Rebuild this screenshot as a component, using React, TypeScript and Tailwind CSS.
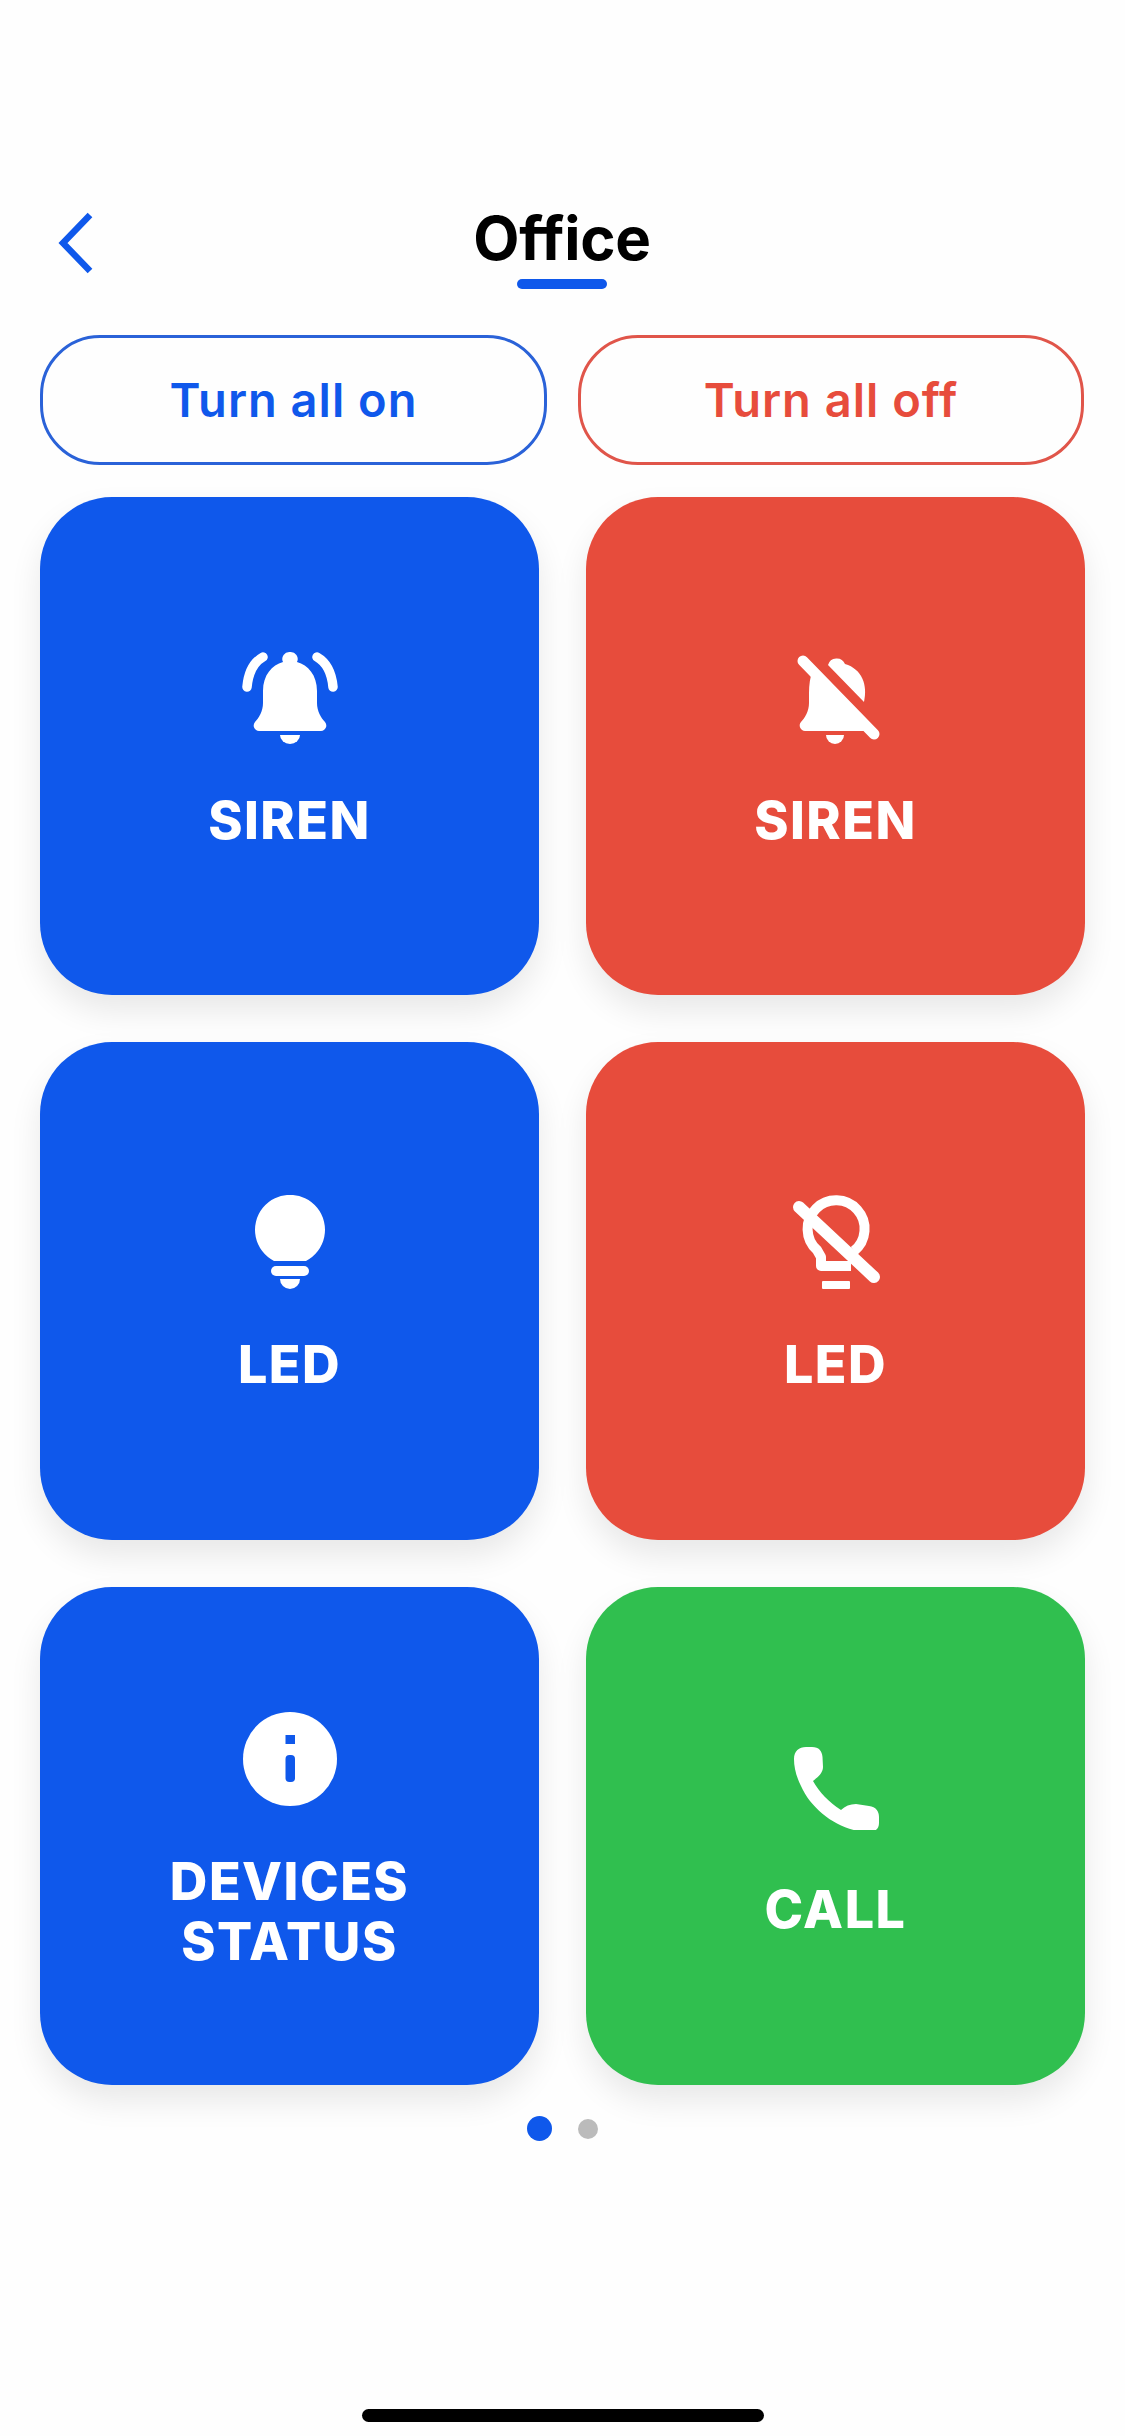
import React from 'react';

const font = { fontFamily: 'Inter, "Liberation Sans", sans-serif' };

const SirenOn = () => (
  <svg width="100" height="96" viewBox="40 30 100 96" fill="#fff">
    <path d="M90 33a7 7 0 0 1 7 10C108 46 117 56 117 72V84C117 92 121 99 125 103A5.500 5.500 0 0 1 121 112H59A5.500 5.500 0 0 1 55 103C59 99 63 92 63 84V72C63 56 72 46 83 43a7 7 0 0 1 7-10Z" />
    <path d="M80 116H100A10 9 0 0 1 80 116Z" />
    <path d="M63 38Q49 46 47 68M117 38Q131 46 133 68" fill="none" stroke="#fff" strokeWidth="9.500" strokeLinecap="round" />
  </svg>
);

const SirenOff = () => (
  <svg width="100" height="96" viewBox="45 30 100 96" fill="#fff">
    <path d="M72 50C69 58 68 66 68 74V84C68 92 64 99 60 103A5.500 5.500 0 0 0 64 112H127L72 50Z" />
    <path d="M87 46L123 83C127 66 121 50 104 45a9 9 0 0 0-17 1Z" />
    <path d="M85 116H103A9 9 0 0 1 85 116Z" />
    <path d="M62 42L133 115" fill="none" stroke="#fff" strokeWidth="11" strokeLinecap="round" />
  </svg>
);

const LedOn = () => (
  <svg width="100" height="96" viewBox="40 26 100 96" fill="#fff">
    <path d="M74 92A35 35 0 1 1 106 92Z" />
    <rect x="71" y="97" width="38" height="10" rx="5" />
    <path d="M80 110H100A10 10 0 0 1 80 110Z" />
  </svg>
);

const LedOff = () => (
  <svg width="100" height="96" viewBox="45 26 100 96" fill="#fff" className="overflow-visible">
    <path d="M113 82A28.500 28.500 0 1 0 76 81L80 88V97H110" fill="none" stroke="#fff" strokeWidth="10" strokeLinejoin="round" />
    <rect x="81" y="112" width="28" height="8" rx="1" />
    <path d="M58 38L133 108" fill="none" stroke="#fff" strokeWidth="12" strokeLinecap="round" />
  </svg>
);

const Info = () => (
  <svg width="100" height="100" viewBox="40 20 100 100">
    <circle cx="90" cy="70" r="47" fill="#fff" />
    <rect x="85.500" y="46" width="9.500" height="9" fill="#0f58eb" />
    <rect x="85.500" y="66" width="9.500" height="27" rx="4" fill="#0f58eb" />
  </svg>
);

const Phone = () => (
  <svg width="100" height="90" viewBox="45 39 100 90" fill="#fff">
    <path d="M53 58C53 50 58 46 65 46H71C78 46 81 50 81.500 56L82 66C82 72 77 76 72 80C78 91 88 101 100 109C104 105 109 103 115 103L128 105C135 106 138 110 138 116V122C138 128 134 131 128 131C100 131 71 110 60 85C55 75 53 66 53 58Z" />
  </svg>
);

type Tile = { label: string[]; bg: string; icon: React.ReactNode; gap: string };

const tiles: Tile[] = [
  { label: ['SIREN'], bg: 'bg-[#0f58eb]', icon: <SirenOn />, gap: 'mt-[46px]' },
  { label: ['SIREN'], bg: 'bg-[#e74c3c]', icon: <SirenOff />, gap: 'mt-[46px]' },
  { label: ['LED'], bg: 'bg-[#0f58eb]', icon: <LedOn />, gap: 'mt-[44px]' },
  { label: ['LED'], bg: 'bg-[#e74c3c]', icon: <LedOff />, gap: 'mt-[44px]' },
  { label: ['DEVICES', 'STATUS'], bg: 'bg-[#0f58eb]', icon: <Info />, gap: 'mt-[43px]' },
  { label: ['CALL'], bg: 'bg-[#30bf4f]', icon: <Phone />, gap: 'mt-[50px]' },
];

export default function App() {
  return (
    <div className="w-[1125px] h-[2436px] bg-[#fefefe] flex flex-col pl-[40px]" style={font}>
      {/* header */}
      <div className="h-[335px] pt-[205px] w-[1044px] grid grid-cols-[1fr_auto_1fr]">
        <svg width="40" height="66" viewBox="0 0 40 66" className="mt-[5px] ml-[16px]">
          <path d="M34 5L7 33L34 61" fill="none" stroke="#0f58eb" strokeWidth="6.500" />
        </svg>
        <div className="flex flex-col items-center">
          <div className="text-[60px] leading-[66px] font-bold text-black tracking-[-0.3px]">Office</div>
          <div className="w-[90px] h-[10px] mt-[8px] rounded-full bg-[#0f58eb]" />
        </div>
      </div>

      {/* all on / off */}
      <div className="flex w-[1044px] justify-between">
        <button className="w-[507px] h-[130px] rounded-[60px] border-[3px] border-[#2a62d8] text-[#0f58eb] text-[47px] tracking-[1px] font-semibold">
          Turn all on
        </button>
        <button className="w-[506px] h-[130px] rounded-[60px] border-[3px] border-[#e0554a] text-[#e74c3c] text-[47px] tracking-[1px] font-semibold">
          Turn all off
        </button>
      </div>

      {/* tiles */}
      <div className="grid grid-cols-[499px_499px] auto-rows-[498px] gap-[47px] mt-[32px]">
        {tiles.map((t, i) => (
          <div
            key={i}
            className={`${t.bg} rounded-[72px] pt-[8px] flex flex-col items-center justify-center text-white shadow-[0_16px_32px_rgba(0,0,0,0.09)]`}
          >
            {t.icon}
            <div className={`${t.gap} text-[52px] leading-[60px] font-extrabold tracking-[1.500px] text-center`}>
              {t.label.map((l) => (
                <div key={l}>{l}</div>
              ))}
            </div>
          </div>
        ))}
      </div>

      {/* pager */}
      <div className="w-[1044px] flex items-center mt-[31px] pl-[487px] gap-[26px] h-[25px]">
        <div className="w-[25px] h-[25px] rounded-full bg-[#0f58eb]" />
        <div className="w-[20px] h-[20px] rounded-full bg-[#bbbbbb]" />
      </div>

      {/* home indicator */}
      <div className="w-[402px] h-[13px] ml-[322px] mt-auto mb-[14px] rounded-full bg-black" />
    </div>
  );
}
